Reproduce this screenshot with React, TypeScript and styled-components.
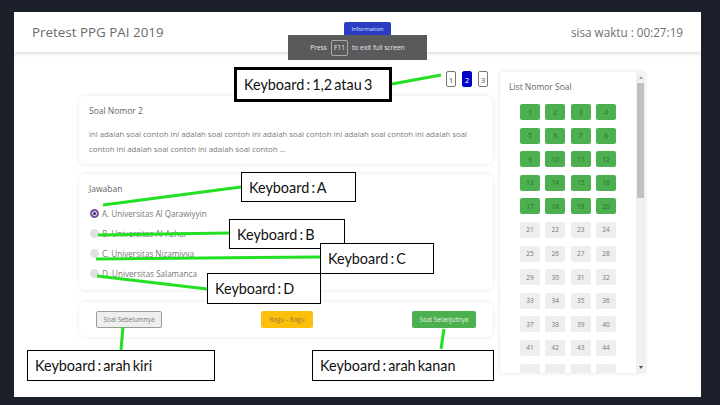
import React from "react";
import styled, { createGlobalStyle } from "styled-components";

const Global = createGlobalStyle`
  html, body { margin: 0; padding: 0; }
  body {
    width: 720px; height: 405px; overflow: hidden;
    background: #1b202b;
    font-family: "Open Sans", "Noto Sans", sans-serif;
  }
`;

const Screen = styled.div`
  position: relative;
  width: 720px;
  height: 405px;
  padding: 12px 19px 8px 14px;
  box-sizing: border-box;
`;

const Page = styled.div`
  position: relative;
  width: 687px;
  height: 385px;
  background: #ffffff;
  display: flex;
  flex-direction: column;
`;

const Header = styled.header`
  height: 40px;
  flex: none;
  display: flex;
  align-items: center;
  justify-content: space-between;
  padding: 0 18px;
  box-shadow: 0 2px 4px rgba(0, 0, 0, 0.13);
`;

const Title = styled.div`
  font-size: 13.4px;
  color: #6a6a6a;
`;

const Timer = styled.div`
  font-size: 11.7px;
  color: #6f6f6f;
`;

const Body = styled.div`
  display: flex;
  align-items: flex-start;
  gap: 7px;
  padding: 19px 0 0 65px;
`;

const LeftCol = styled.div`
  width: 414px;
  display: flex;
  flex-direction: column;
`;

const Pager = styled.div`
  display: flex;
  justify-content: flex-end;
  gap: 6px;
  padding-right: 5px;
  margin-bottom: 9px;
`;

const PageBtn = styled.div<{ $active?: boolean }>`
  width: 10px;
  height: 16px;
  box-sizing: border-box;
  border-radius: 2px;
  border: 1px solid ${(p) => (p.$active ? "#0000cc" : "#777")};
  background: ${(p) => (p.$active ? "#0000cc" : "#fff")};
  color: ${(p) => (p.$active ? "#fff" : "#555")};
  font-size: 8px;
  display: flex;
  align-items: center;
  justify-content: center;
`;

const Card = styled.div<{ $h: number; $mt?: number }>`
  height: ${(p) => p.$h}px;
  margin-top: ${(p) => p.$mt || 0}px;
  box-sizing: border-box;
  border-radius: 6px;
  background: #fff;
  box-shadow: 0 0 4px rgba(0, 0, 0, 0.1);
  padding: 9px 10px;
`;

const CardTitle = styled.div`
  font-size: 8.5px;
  line-height: 12px;
  color: #666;
`;

const QText = styled.p`
  margin: 10px 0 0;
  font-size: 7.8px;
  line-height: 15px;
  color: #7a7a7a;
`;

const Options = styled.div`
  margin-top: 12px;
  display: flex;
  flex-direction: column;
  gap: 8px;
`;

const Option = styled.label`
  display: flex;
  align-items: center;
  gap: 3px;
  height: 12px;
  font-size: 8.1px;
  color: #777;
  padding-left: 1px;
`;

const Radio = styled.span<{ $checked?: boolean }>`
  width: 9px;
  height: 9px;
  border-radius: 50%;
  box-sizing: border-box;
  background: ${(p) => (p.$checked ? "#3d1e63" : "#e0e0e0")};
  border: ${(p) => (p.$checked ? "2px solid #7b4fa8" : "none")};
  box-shadow: ${(p) => (p.$checked ? "inset 0 0 0 1px #fff" : "none")};
`;

const NavCard = styled(Card)`
  display: flex;
  align-items: center;
  justify-content: space-between;
  padding: 0 17px;
`;

const NavBtn = styled.div<{ $variant: "prev" | "doubt" | "next" }>`
  height: 17px;
  box-sizing: border-box;
  border-radius: 2px;
  font-size: 6.4px;
  display: flex;
  align-items: center;
  justify-content: center;
  width: ${(p) => (p.$variant === "doubt" ? 52 : p.$variant === "prev" ? 66 : 64)}px;
  background: ${(p) =>
    p.$variant === "prev" ? "#eeeeee" : p.$variant === "doubt" ? "#fbbf0c" : "#4caf50"};
  border: ${(p) => (p.$variant === "prev" ? "1px solid #9a9a9a" : "none")};
  color: ${(p) =>
    p.$variant === "prev" ? "#777" : p.$variant === "doubt" ? "#a07a30" : "#e6f4e6"};
`;

const Panel = styled.aside`
  margin-top: 1px;
  width: 145px;
  height: 301px;
  display: flex;
  background: #fff;
  box-shadow: 0 0 4px rgba(0, 0, 0, 0.12);
  border-radius: 3px 0 0 3px;
  overflow: hidden;
`;

const PanelInner = styled.div`
  flex: 1;
  padding: 9px 0 0 9px;
  overflow: hidden;
`;

const PanelTitle = styled.div`
  font-size: 8.5px;
  line-height: 12px;
  color: #666;
`;

const NumGrid = styled.div`
  margin: 11px 0 0 11px;
  display: grid;
  grid-template-columns: repeat(4, 20px);
  column-gap: 5.33px;
  row-gap: 7.6px;
`;

const NumBtn = styled.div<{ $done?: boolean }>`
  height: 16px;
  border-radius: 2px;
  background: ${(p) => (p.$done ? "#4caf50" : "#eeeeee")};
  color: ${(p) => (p.$done ? "#2f6a32" : "#777")};
  font-size: 6.5px;
  display: flex;
  align-items: center;
  justify-content: center;
`;

const ScrollBar = styled.div`
  width: 9px;
  background: #f1f1f1;
  display: flex;
  flex-direction: column;
  align-items: center;
`;

const Arrow = styled.div<{ $down?: boolean }>`
  width: 0;
  height: 0;
  margin: 4px 0;
  border-left: 2px solid transparent;
  border-right: 2px solid transparent;
  ${(p) => (p.$down ? "border-top: 3px solid #555;" : "border-bottom: 3px solid #a3a3a3;")}
`;

const Thumb = styled.div`
  width: 7px;
  height: 115px;
  background: #c1c1c1;
`;

const Spacer = styled.div`
  flex: 1;
`;

/* Fullscreen notice overlay */
const InfoBtn = styled.div`
  position: absolute;
  left: 330px;
  top: 10px;
  width: 47px;
  height: 14px;
  border-radius: 2px;
  background: #2b3cc4;
  color: #dfe3ff;
  font-size: 5.8px;
  display: flex;
  align-items: flex-start;
  padding-top: 3px;
  box-sizing: border-box;
  justify-content: center;
`;

const Notice = styled.div`
  position: absolute;
  left: 274px;
  top: 23px;
  width: 139px;
  height: 25px;
  background: #595a5c;
  color: #e8e8e8;
  font-size: 6.6px;
  display: flex;
  align-items: center;
  justify-content: center;
  gap: 4px;
`;

const Key = styled.span`
  border: 1px solid #aaa;
  border-radius: 2px;
  width: 17px;
  height: 16px;
  box-sizing: border-box;
  display: flex;
  align-items: center;
  justify-content: center;
`;

/* annotation overlay */
const Lines = styled.svg`
  position: absolute;
  left: 0;
  top: 0;
  width: 720px;
  height: 405px;
  pointer-events: none;
`;

const Note = styled.div<{ $x: number; $y: number; $w: number; $h: number; $thick?: boolean }>`
  position: absolute;
  left: ${(p) => p.$x}px;
  top: ${(p) => p.$y}px;
  width: ${(p) => p.$w}px;
  height: ${(p) => p.$h}px;
  box-sizing: border-box;
  background: #fff;
  border: ${(p) => (p.$thick ? 3 : 1)}px solid #000;
  display: flex;
  align-items: center;
  padding-left: 7px;
  font-family: Lato, "Liberation Sans", sans-serif;
  font-size: 14.4px;
  color: #111;
  word-spacing: -1.5px;
  white-space: nowrap;
`;

const notes = [
  { x: 234, y: 67, w: 158, h: 35, t: "Keyboard : 1,2 atau 3", thick: true },
  { x: 241, y: 172, w: 115, h: 30, t: "Keyboard : A" },
  { x: 229, y: 219, w: 116, h: 30, t: "Keyboard : B" },
  { x: 320, y: 243, w: 114, h: 31, t: "Keyboard : C" },
  { x: 207, y: 273, w: 114, h: 31, t: "Keyboard : D" },
  { x: 27, y: 350, w: 188, h: 31, t: "Keyboard : arah kiri" },
  { x: 312, y: 350, w: 182, h: 31, t: "Keyboard : arah kanan" },
];

const lines = [
  [392, 84, 441, 75],
  [103, 205, 241, 187],
  [98, 235, 229, 233],
  [96, 259, 320, 257],
  [97, 276, 207, 289],
  [123, 327, 121, 350],
  [444, 329, 441, 349],
];

const options = [
  "A. Universitas Al Qarawiyyin",
  "B. Universitas Al-Azhar",
  "C. Universitas Nizamiyya",
  "D. Universitas Salamanca",
];

export default function App() {
  const nums = Array.from({ length: 44 }, (_, i) => i + 1);
  return (
    <>
      <Global />
      <Screen>
        <Page>
          <Header>
            <Title>Pretest PPG PAI 2019</Title>
            <Timer>sisa waktu : 00:27:19</Timer>
          </Header>
          <Body>
            <LeftCol>
              <Pager>
                <PageBtn>1</PageBtn>
                <PageBtn $active>2</PageBtn>
                <PageBtn>3</PageBtn>
              </Pager>
              <Card $h={68}>
                <CardTitle>Soal Nomor 2</CardTitle>
                <QText>
                  ini adalah soal contoh ini adalah soal contoh ini adalah soal contoh ini adalah soal
                  contoh ini adalah soal contoh ini adalah soal contoh ini adalah soal contoh ...
                </QText>
              </Card>
              <Card $h={116} $mt={10}>
                <CardTitle>Jawaban</CardTitle>
                <Options>
                  {options.map((o, i) => (
                    <Option key={o}>
                      <Radio $checked={i === 0} />
                      {o}
                    </Option>
                  ))}
                </Options>
              </Card>
              <NavCard $h={35} $mt={12}>
                <NavBtn $variant="prev">Soal Sebelumnya</NavBtn>
                <NavBtn $variant="doubt">Ragu - Ragu</NavBtn>
                <NavBtn $variant="next">Soal Selanjutnya</NavBtn>
              </NavCard>
            </LeftCol>
            <Panel>
              <PanelInner>
                <PanelTitle>List Nomor Soal</PanelTitle>
                <NumGrid>
                  {nums.map((n) => (
                    <NumBtn key={n} $done={n <= 20}>
                      {n}
                    </NumBtn>
                  ))}
                  {[45, 46, 47, 48].map((n) => (
                    <NumBtn key={n} aria-hidden />
                  ))}
                </NumGrid>
              </PanelInner>
              <ScrollBar>
                <Arrow />
                <Thumb />
                <Spacer />
                <Arrow $down />
              </ScrollBar>
            </Panel>
          </Body>
          <InfoBtn>Information</InfoBtn>
          <Notice>
            Press <Key>F11</Key> to exit full screen
          </Notice>
        </Page>
        <Lines viewBox="0 0 720 405">
          {lines.map(([x1, y1, x2, y2], i) => (
            <line key={i} x1={x1} y1={y1} x2={x2} y2={y2} stroke="#22e022" strokeWidth={3} />
          ))}
        </Lines>
        {notes.map((n) => (
          <Note key={n.t} $x={n.x} $y={n.y} $w={n.w} $h={n.h} $thick={n.thick}>
            {n.t}
          </Note>
        ))}
      </Screen>
    </>
  );
}
